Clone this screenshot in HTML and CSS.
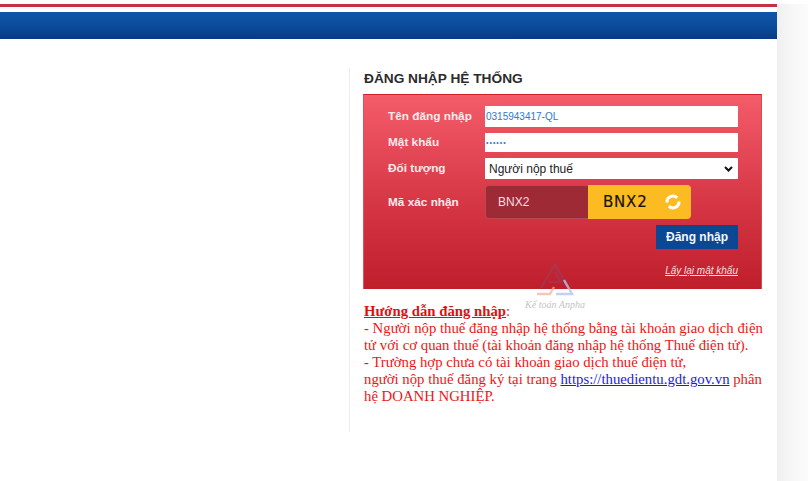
FILE: index.html
```html
<!DOCTYPE html>
<html lang="vi">
<head>
<meta charset="utf-8">
<title>Đăng nhập hệ thống</title>
<link rel="stylesheet" href="styles.css">
</head>
<body>
<div class="page">
  <div class="main">
    <div class="top-stripe"></div>
    <div class="blue-bar"></div>
    <div class="content">
      <div class="left"></div>
      <div class="right">
        <h2 class="title">ĐĂNG NHẬP HỆ THỐNG</h2>
        <form class="panel">
          <label class="lbl">Tên đăng nhập</label>
          <input class="field field-a" type="text" value="0315943417-QL">
          <label class="lbl lbl-b">Mật khẩu</label>
          <input class="field field-b" type="password" value="123456">
          <label class="lbl lbl-c">Đối tượng</label>
          <div class="select-wrap">
            <select class="field field-c"><option>Người nộp thuế</option></select>
            <svg class="chevron" width="9" height="6" viewBox="0 0 9 6" fill="none" stroke="#111" stroke-width="2"><path d="M1 1l3.5 3.5L8 1"/></svg>
          </div>
          <label class="lbl lbl-d">Mã xác nhận</label>
          <div class="captcha">
            <div class="cap-input">BNX2</div>
            <div class="cap-img">
              <span class="cap-code">BNX2</span>
              <svg class="cap-icon" width="18" height="18" viewBox="0 0 18 18" fill="none" stroke="#fff" stroke-width="3"><path d="M3 9.5a6 6 0 0 1 10.2-4.6"/><path d="M15 8.5a6 6 0 0 1-10.2 4.6"/></svg>
            </div>
          </div>
          <button class="submit" type="button">Đăng nhập</button>
          <a class="forgot" href="#">Lấy lại mật khẩu</a>
        </form>
        <div class="guide">
          <a class="guide-title">Hướng dẫn đăng nhập</a>:<br>
          - Người nộp thuế đăng nhập hệ thống bằng tài khoản giao dịch điện<br>
          tử với cơ quan thuế (tài khoản đăng nhập hệ thống Thuế điện tử).<br>
          - Trường hợp chưa có tài khoản giao dịch thuế điện tử,<br>
          <span>người nộp thuế đăng ký tại trang</span> <a class="guide-link" href="#">https://thuedientu.gdt.gov.vn</a> <span>phân</span><br>
          hệ DOANH NGHIỆP.
        </div>
        <div class="watermark">
          <svg width="38" height="34" viewBox="0 0 38 34" fill="none" stroke-width="2.4">
            <path d="M19 2L5 26" stroke="#8a4a78" opacity=".4"/>
            <path d="M19 2l13 24" stroke="#8a4a78" opacity=".4"/>
            <path d="M13 20h12l-6-10" stroke="#8a4a78" opacity=".35"/>
            <path d="M1 32h13l4-7" stroke="#eeb0a0" opacity=".7"/>
            <path d="M20 32h16l-8-14" stroke="#b4c6e6" opacity=".8"/>
          </svg>
          <span class="wm-text">Kế toán Anpha</span>
        </div>
      </div>
    </div>
  </div>
  <div class="gutter"></div>
</div>
</body>
</html>
```
FILE: styles.css
```css
* { box-sizing: border-box; }
html, body { margin: 0; padding: 0; background: #fff; overflow: hidden; }
body { width: 808px; height: 481px; font-family: "Liberation Sans", Arial, sans-serif; }
.page { display: flex; height: 481px; }
.main { width: 777px; padding-top: 4px; background: #fff; }
.gutter { flex: 1; background: linear-gradient(90deg, #efefef 0, #f7f7f7 14px, #fbfbfb 31px); margin-top: 4px; }
.top-stripe { height: 3px; background: #c8303f; }
.blue-bar { height: 27px; margin-top: 5px; background: linear-gradient(180deg, #0f56a8 0, #0c4c9c 50%, #063a84 100%); }
.content { display: flex; padding-top: 29px; }
.left { width: 349px; }
.right { position: relative; width: 414px; height: 364px; border-left: 1px solid #ececec; padding-left: 14px; }
.title { margin: 0; padding-top: 3px; font-size: 13.7px; line-height: 16px; font-weight: 700; color: #2b2b2b; }
.panel { display: grid; grid-template-columns: 121px 253px 24px; grid-template-rows: 21px 19px 21px 34px 24px auto; row-gap: 6px; width: 399px; height: 195px; margin: 7px 0 0 -1px; padding-top: 11px; background: linear-gradient(180deg, #f45c6a 0, #d93a48 50%, #bf1e2b 100%); border-top: 1px solid #d21f2c; border-left: 1px solid #e2505c; border-right: 1px solid #d84a56; }
.lbl { padding-left: 24px; font-size: 11.8px; font-weight: 700; line-height: 21px; color: #fbeaec; grid-column: 1; white-space: nowrap; }
.lbl-b { line-height: 19px; }
.lbl-d { line-height: 34px; }
.field { grid-column: 2; margin: 0; width: 253px; border: 0; border-radius: 0; background: #fff; outline: 0; font-family: "Liberation Sans", Arial, sans-serif; }
.field-a { height: 21px; padding: 0 1px; font-size: 10px; color: #2a7ad2; }
.field-b { height: 19px; padding: 0 1px; font-size: 7px; letter-spacing: 1px; color: #2a7ad2; }
.select-wrap { grid-column: 2; position: relative; height: 21px; }
.field-c { display: block; height: 21px; padding: 0 0 0 4px; font-size: 12px; color: #222; appearance: none; -webkit-appearance: none; }
.chevron { position: absolute; right: 5px; top: 8px; pointer-events: none; }
.captcha { grid-column: 2 / 4; display: flex; width: 206px; height: 34px; border-radius: 4px; overflow: hidden; }
.cap-input { width: 103px; padding-left: 12px; line-height: 32px; font-size: 12px; color: #f3dfe2; background: #9e2a35; border: 1px solid #b84a55; border-right: 0; border-radius: 4px 0 0 4px; }
.cap-img { flex: 1; display: flex; align-items: center; padding-left: 15px; background: #fdbb23; }
.cap-code { width: 61px; font-family: "DejaVu Sans", sans-serif; font-size: 15px; letter-spacing: .8px; color: #181410; -webkit-text-stroke: .2px #181410; }
.cap-icon { display: block; }
.submit { grid-column: 2; grid-row: 5; justify-self: end; width: 82px; height: 24px; margin: 0; padding: 0; border: 0; background: #0c4793; color: #f4f6fa; font-family: "Liberation Sans", Arial, sans-serif; font-size: 12px; font-weight: 700; }
.forgot { grid-column: 2; grid-row: 6; justify-self: end; align-self: start; margin-top: 10px; font-size: 10px; font-style: italic; color: #f7dfe0; text-decoration: underline; }
.guide { width: 404px; margin: 14px 0 0 0; font-family: "Liberation Serif", "Times New Roman", serif; font-size: 14.75px; line-height: 17px; color: #f01414; }
.guide-title { font-weight: 700; color: #e00f0f; text-decoration: underline; }
.guide-link { color: #1a1ae6; text-decoration: underline; }
.watermark { position: absolute; left: 175px; top: 194px; width: 60px; display: flex; flex-direction: column; align-items: center; pointer-events: none; }
.wm-text { margin-top: 3px; font-family: "Liberation Serif", serif; font-style: italic; font-size: 10px; white-space: nowrap; color: #c4c4c4; }
```
